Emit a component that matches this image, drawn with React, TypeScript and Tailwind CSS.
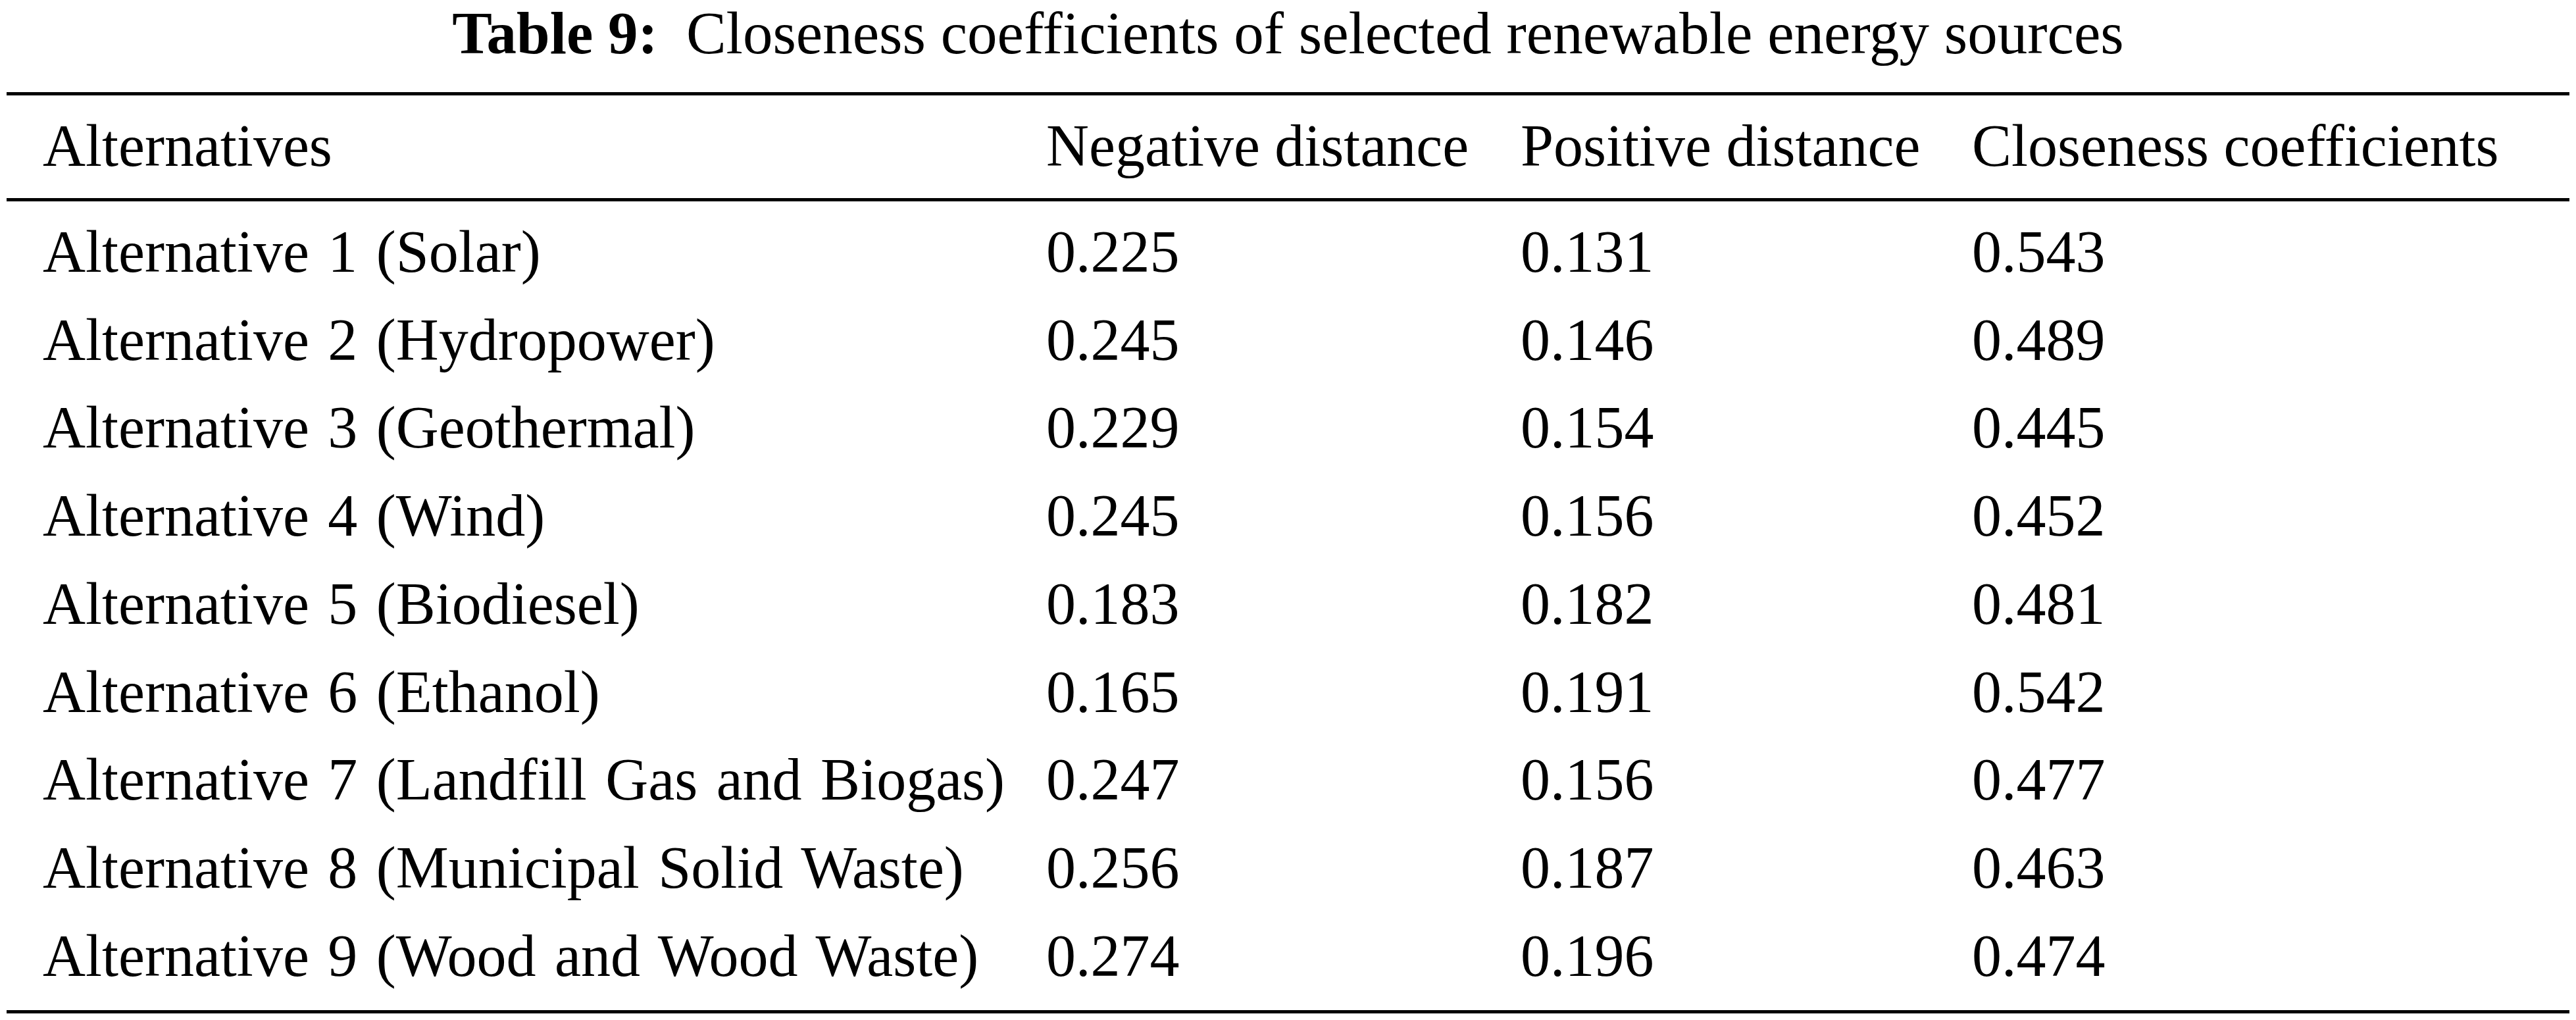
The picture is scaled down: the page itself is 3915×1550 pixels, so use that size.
const header = ["Alternatives", "Negative distance", "Positive distance", "Closeness coefficients"];

const rows: [string, string, string, string][] = [
  ["Alternative 1 (Solar)", "0.225", "0.131", "0.543"],
  ["Alternative 2 (Hydropower)", "0.245", "0.146", "0.489"],
  ["Alternative 3 (Geothermal)", "0.229", "0.154", "0.445"],
  ["Alternative 4 (Wind)", "0.245", "0.156", "0.452"],
  ["Alternative 5 (Biodiesel)", "0.183", "0.182", "0.481"],
  ["Alternative 6 (Ethanol)", "0.165", "0.191", "0.542"],
  ["Alternative 7 (Landfill Gas and Biogas)", "0.247", "0.156", "0.477"],
  ["Alternative 8 (Municipal Solid Waste)", "0.256", "0.187", "0.463"],
  ["Alternative 9 (Wood and Wood Waste)", "0.274", "0.196", "0.474"],
];

function Row({ cells, body }: { cells: string[]; body?: boolean }) {
  return (
    <div className="grid grid-cols-[1525px_721px_686px_1fr] pl-[55px] h-[133.75px] leading-[133.75px] whitespace-nowrap">
      {cells.map((c, i) => (
        <div key={i} className={body && i === 0 ? "[word-spacing:6px]" : ""}>
          {c}
        </div>
      ))}
    </div>
  );
}

export default function App() {
  return (
    <div
      className="w-[3915px] h-[1550px] bg-white text-black text-[90px] overflow-hidden"
      style={{ fontFamily: '"Liberation Serif", "Times New Roman", serif' }}
    >
      <div className="h-[102px] leading-[102px] text-[91px] text-center whitespace-nowrap">
        <span className="font-bold">Table 9:</span>
        <span className="ml-[43px]">Closeness coefficients of selected renewable energy sources</span>
      </div>

      <div className="mx-[10px] mt-[38px] border-t-[5px] border-b-[5px] border-black">
        <div className="pt-[10px] pb-[12px] border-b-[5px] border-black">
          <Row cells={header} />
        </div>
        <div className="pt-[10px] pb-[15px]">
          {rows.map((r) => (
            <Row key={r[0]} cells={r} body />
          ))}
        </div>
      </div>
    </div>
  );
}
